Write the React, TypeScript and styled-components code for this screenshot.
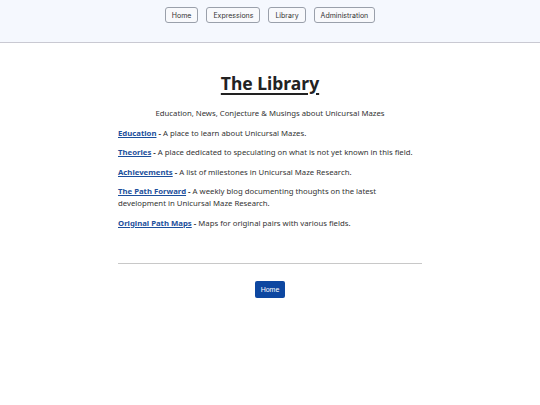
import React, { FC } from 'react';
import styled, { createGlobalStyle } from 'styled-components';

const GlobalStyle = createGlobalStyle`
	html, body {
		margin: 0;
		padding: 0;
		background: #ffffff;
	}
	body {
		font-family: 'Noto Sans', 'Open Sans', sans-serif;
		color: #333333;
	}
`;

const Header = styled('header')`
	height: 43px;
	background: #f5f8fe;
	border-bottom: 1px solid #c9c9d2;
	display: flex;
	justify-content: center;
	align-items: flex-start;
	padding-top: 7px;
	box-sizing: border-box;
	gap: 8px;
`;

const NavButton = styled('a')`
	display: inline-flex;
	align-items: center;
	height: 16px;
	padding: 0 6px;
	box-sizing: border-box;
	border: 1px solid #9aa0ab;
	border-radius: 3px;
	background: #f8f9fc;
	font-family: 'Inter', 'Liberation Sans', sans-serif;
	font-size: 7px;
	color: #333;
	text-decoration: none;
`;

const Main = styled('main')`
	width: 304px;
	margin: 0 auto;
	padding-top: 27px;
`;

const Title = styled('h1')`
	margin: 0;
	text-align: center;
	font-size: 17.5px;
	line-height: 26px;
	font-weight: 700;
	color: #222;
	text-decoration: underline;
	text-decoration-thickness: 2px;
	text-underline-offset: 3px;
`;

const Subtitle = styled('p')`
	margin: 11px 0 0;
	text-align: center;
	font-size: 7.75px;
	line-height: 12px;
`;

const Entry = styled('p')`
	margin: 7.5px 0 0;
	font-size: 7.75px;
	line-height: 12px;
`;

const EntryLink = styled('a')`
	color: #1c4f9c;
	font-weight: 700;
	text-decoration: underline;
`;

const Dash = styled('b')`
	font-weight: 700;
`;

const Rule = styled('hr')`
	margin: 34px 0 0;
	border: 0;
	border-top: 1px solid #c8c8c8;
`;

const Footer = styled('div')`
	display: flex;
	justify-content: center;
	margin-top: 17px;
`;

const HomeButton = styled('a')`
	display: inline-flex;
	align-items: center;
	justify-content: center;
	height: 17px;
	padding: 0 6px;
	border-radius: 2px;
	background: #0d47a1;
	color: #ffffff;
	font-family: 'Liberation Sans', 'Inter', sans-serif;
	font-size: 7px;
	text-decoration: none;
`;

const entries = [
	{ name: 'Education', text: 'A place to learn about Unicursal Mazes.' },
	{ name: 'Theories', text: 'A place dedicated to speculating on what is not yet known in this field.' },
	{ name: 'Achievements', text: 'A list of milestones in Unicursal Maze Research.' },
	{ name: 'The Path Forward', text: 'A weekly blog documenting thoughts on the latest development in Unicursal Maze Research.' },
	{ name: 'Original Path Maps', text: 'Maps for original pairs with various fields.' },
];

const App: FC = () => {
	return (
		<>
			<GlobalStyle />
			<Header>
				<NavButton href="#">{'Home'}</NavButton>
				<NavButton href="#">{'Expressions'}</NavButton>
				<NavButton href="#">{'Library'}</NavButton>
				<NavButton href="#">{'Administration'}</NavButton>
			</Header>
			<Main>
				<Title>{'The Library'}</Title>
				<Subtitle>{'Education, News, Conjecture & Musings about Unicursal Mazes'}</Subtitle>
				{entries.map((e) => (
					<Entry key={e.name}>
						<EntryLink href="#">{e.name}</EntryLink>
						<Dash>{' - '}</Dash>
						{e.text}
					</Entry>
				))}
				<Rule />
				<Footer>
					<HomeButton href="#">{'Home'}</HomeButton>
				</Footer>
			</Main>
		</>
	);
};

export default App;
